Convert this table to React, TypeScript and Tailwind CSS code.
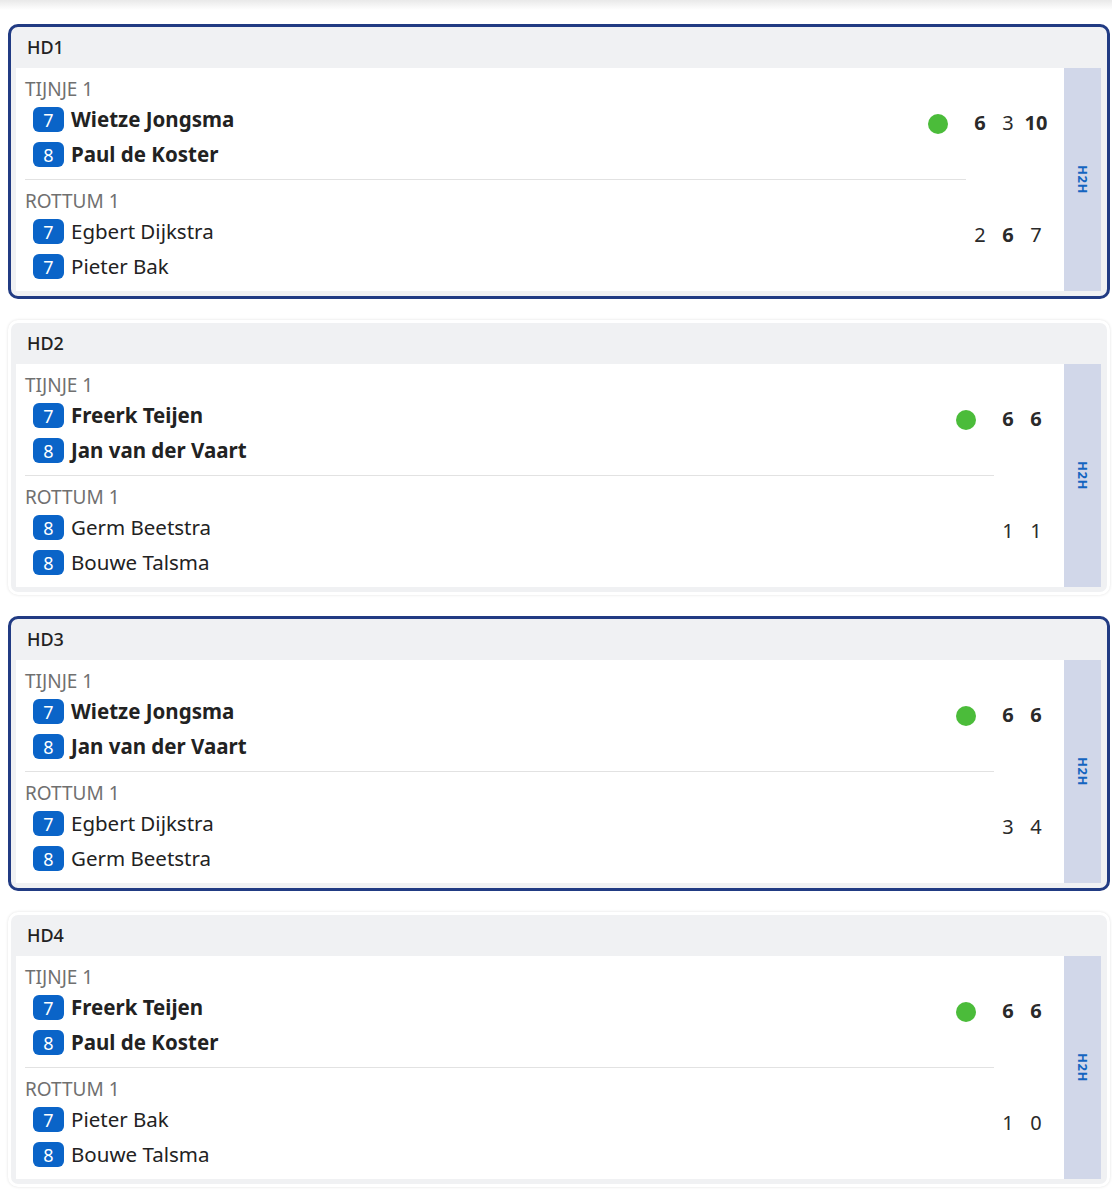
import React from 'react';

type Player = { rank: number; name: string };
type Team = { club: string; players: Player[]; scores: { v: number; bold: boolean }[] };
type Match = { code: string; active: boolean; teams: [Team, Team] };

const matches: Match[] = [
  {
    code: 'HD1',
    active: true,
    teams: [
      {
        club: 'TIJNJE 1',
        players: [
          { rank: 7, name: 'Wietze Jongsma' },
          { rank: 8, name: 'Paul de Koster' },
        ],
        scores: [
          { v: 6, bold: true },
          { v: 3, bold: false },
          { v: 10, bold: true },
        ],
      },
      {
        club: 'ROTTUM 1',
        players: [
          { rank: 7, name: 'Egbert Dijkstra' },
          { rank: 7, name: 'Pieter Bak' },
        ],
        scores: [
          { v: 2, bold: false },
          { v: 6, bold: true },
          { v: 7, bold: false },
        ],
      },
    ],
  },
  {
    code: 'HD2',
    active: false,
    teams: [
      {
        club: 'TIJNJE 1',
        players: [
          { rank: 7, name: 'Freerk Teijen' },
          { rank: 8, name: 'Jan van der Vaart' },
        ],
        scores: [
          { v: 6, bold: true },
          { v: 6, bold: true },
        ],
      },
      {
        club: 'ROTTUM 1',
        players: [
          { rank: 8, name: 'Germ Beetstra' },
          { rank: 8, name: 'Bouwe Talsma' },
        ],
        scores: [
          { v: 1, bold: false },
          { v: 1, bold: false },
        ],
      },
    ],
  },
  {
    code: 'HD3',
    active: true,
    teams: [
      {
        club: 'TIJNJE 1',
        players: [
          { rank: 7, name: 'Wietze Jongsma' },
          { rank: 8, name: 'Jan van der Vaart' },
        ],
        scores: [
          { v: 6, bold: true },
          { v: 6, bold: true },
        ],
      },
      {
        club: 'ROTTUM 1',
        players: [
          { rank: 7, name: 'Egbert Dijkstra' },
          { rank: 8, name: 'Germ Beetstra' },
        ],
        scores: [
          { v: 3, bold: false },
          { v: 4, bold: false },
        ],
      },
    ],
  },
  {
    code: 'HD4',
    active: false,
    teams: [
      {
        club: 'TIJNJE 1',
        players: [
          { rank: 7, name: 'Freerk Teijen' },
          { rank: 8, name: 'Paul de Koster' },
        ],
        scores: [
          { v: 6, bold: true },
          { v: 6, bold: true },
        ],
      },
      {
        club: 'ROTTUM 1',
        players: [
          { rank: 7, name: 'Pieter Bak' },
          { rank: 8, name: 'Bouwe Talsma' },
        ],
        scores: [
          { v: 1, bold: false },
          { v: 0, bold: false },
        ],
      },
    ],
  },
];

function TeamRow({ team, winner, first }: { team: Team; winner: boolean; first: boolean }) {
  return (
    <div className="flex">
      <div
        className={`flex-1 flex items-center ml-[9px] pt-2 pb-[7px] ${
          first ? 'border-b border-[#e2e2e2]' : ''
        }`}
      >
        <div className="flex-1">
          <div className="h-[26px] leading-[26px] text-[19px] text-[#707070]">{team.club}</div>
          {team.players.map((p) => (
            <div key={p.name} className="h-[35px] flex items-center ml-2">
              <span className="w-[31px] h-[25px] rounded-[6px] bg-[#0a64c8] text-white text-[18px] leading-none flex items-center justify-center">
                {p.rank}
              </span>
              <span
                className={`ml-[7px] text-[20.5px] text-[#222] ${
                  winner ? 'font-bold' : 'font-normal'
                }`}
              >
                {p.name}
              </span>
            </div>
          ))}
        </div>
        {winner && <div className="w-5 h-5 rounded-full bg-[#4bbc3a] mr-[18px]" />}
      </div>
      <div className="flex items-center pr-[14px] pb-[2px]">
        {team.scores.map((s, i) => (
          <span
            key={i}
            className={`w-7 text-center text-[20px] text-[#2a2a2a] ${s.bold ? 'font-bold' : 'font-normal'}`}
          >
            {s.v}
          </span>
        ))}
      </div>
    </div>
  );
}

function MatchCard({ match }: { match: Match }) {
  return (
    <div
      className={`rounded-[10px] border-[3px] bg-[#f0f1f3] ${
        match.active
          ? 'border-[#213b83]'
          : 'border-white shadow-[0_0_3px_rgba(0,0,0,0.12)]'
      }`}
    >
      <div className="h-[41px] flex items-center pl-4 text-[18px] font-medium text-[#222]">
        {match.code}
      </div>
      <div className="flex pl-[5px] pr-[6px] pb-[5px]">
        <div className="flex-1 bg-white">
          <TeamRow team={match.teams[0]} winner first />
          <TeamRow team={match.teams[1]} winner={false} first={false} />
        </div>
        <div className="w-[37px] bg-[#d1d7e9] flex items-center justify-center">
          <span className="[writing-mode:vertical-rl] text-[13px] font-bold text-[#1565c0] tracking-[0.5px]">
            H2H
          </span>
        </div>
      </div>
    </div>
  );
}

export default function App() {
  return (
    <div className="min-h-[1195px] bg-white font-['Noto_Sans',sans-serif]">
      <div className="h-[10px] bg-gradient-to-b from-[#e9e9e9] to-white" />
      <div className="pt-[14px] pl-2 pr-[2px] flex flex-col gap-[21px]">
        {matches.map((m) => (
          <MatchCard key={m.code} match={m} />
        ))}
      </div>
    </div>
  );
}
